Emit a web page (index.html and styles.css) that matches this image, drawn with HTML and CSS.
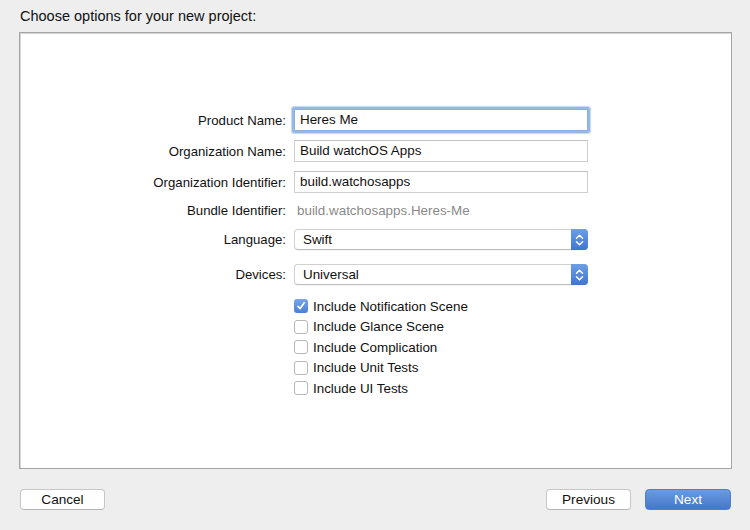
FILE: index.html
```html
<!DOCTYPE html>
<html>
<head>
<meta charset="utf-8">
<link rel="stylesheet" href="styles.css">
</head>
<body>
<div class="window">
  <div class="title">Choose options for your new project:</div>
  <div class="panel">
    <div class="form">
      <div class="row row-product">
        <div class="label">Product Name:</div>
        <div class="field focused">Heres Me</div>
      </div>
      <div class="row row-org">
        <div class="label">Organization Name:</div>
        <div class="field">Build watchOS Apps</div>
      </div>
      <div class="row row-orgid">
        <div class="label">Organization Identifier:</div>
        <div class="field">build.watchosapps</div>
      </div>
      <div class="row row-bundle">
        <div class="label">Bundle Identifier:</div>
        <div class="static">build.watchosapps.Heres-Me</div>
      </div>
      <div class="row row-lang">
        <div class="label">Language:</div>
        <div class="popup"><span class="popup-text">Swift</span><span class="stepper"><svg width="9" height="14" viewBox="0 0 9 14"><path d="M1.5 5.2 L4.5 2.2 L7.5 5.2 M1.5 8.8 L4.5 11.8 L7.5 8.8" fill="none" stroke="#fff" stroke-width="1.5" stroke-linecap="round" stroke-linejoin="round"/></svg></span></div>
      </div>
      <div class="row row-dev">
        <div class="label">Devices:</div>
        <div class="popup"><span class="popup-text">Universal</span><span class="stepper"><svg width="9" height="14" viewBox="0 0 9 14"><path d="M1.5 5.2 L4.5 2.2 L7.5 5.2 M1.5 8.8 L4.5 11.8 L7.5 8.8" fill="none" stroke="#fff" stroke-width="1.5" stroke-linecap="round" stroke-linejoin="round"/></svg></span></div>
      </div>
      <div class="checks">
        <div class="check-row"><span class="box checked"><svg width="10" height="10" viewBox="0 0 10 10"><path d="M2 5.3 L4.2 7.6 L8.2 1.8" fill="none" stroke="#fff" stroke-width="1.7" stroke-linecap="round" stroke-linejoin="round"/></svg></span>Include Notification Scene</div>
        <div class="check-row"><span class="box"></span>Include Glance Scene</div>
        <div class="check-row"><span class="box"></span>Include Complication</div>
        <div class="check-row"><span class="box"></span>Include Unit Tests</div>
        <div class="check-row"><span class="box"></span>Include UI Tests</div>
      </div>
    </div>
  </div>
  <div class="footer">
    <div class="btn">Cancel</div>
    <div class="right-btns">
      <div class="btn">Previous</div>
      <div class="btn primary">Next</div>
    </div>
  </div>
</div>
</body>
</html>
```

FILE: styles.css
```css
* { box-sizing: border-box; }
html, body {
  margin: 0;
  padding: 0;
  background: #eeeeee;
}
body {
  font-family: "Liberation Sans", Arial, sans-serif;
  color: #111;
  width: 750px;
  height: 530px;
  overflow: hidden;
}
.window {
  display: flex;
  flex-direction: column;
  height: 530px;
}
.title {
  font-size: 14.5px;
  padding: 8px 0 0 20px;
  height: 32px;
  line-height: 17px;
}
.panel {
  margin-left: 19px;
  width: 713px;
  height: 437px;
  background: #ffffff;
  border: 1px solid #a6a6a6;
  box-shadow: inset 1px 1px 0 #d4d4d4;
  padding-top: 76px;
}
.form {
  display: flex;
  flex-direction: column;
}
.row {
  display: flex;
  align-items: center;
  height: 22px;
}
.row-org, .row-orgid { margin-top: 9px; }
.row-bundle { margin-top: 6px; }
.row-lang { margin-top: 8px; height: 21px; }
.row-dev { margin-top: 14px; height: 21px; }
.label {
  width: 266px;
  text-align: right;
  font-size: 13.2px;
  margin-right: 8px;
  flex: none;
}
.field {
  width: 294px;
  height: 22px;
  border: 1px solid #cfcfcf;
  border-top-color: #c2c2c2;
  background: #fff;
  font-size: 13.4px;
  line-height: 20px;
  padding-left: 5px;
  color: #111;
}
.field.focused {
  box-shadow: 0 0 0 2px #98b8e4, 0 0 1px 3px #c4d7f1;
  border-color: #8eaedb;
  border-radius: 1px;
}
.static {
  font-size: 13.4px;
  color: #8a8a8a;
  padding-left: 3px;
}
.popup {
  width: 294px;
  height: 21px;
  border: 1px solid #d0d0d0;
  border-bottom-color: #bdbdbd;
  border-radius: 4px;
  background: #fff;
  display: flex;
  align-items: center;
  justify-content: space-between;
  box-shadow: 0 1px 0 rgba(0,0,0,0.04);
}
.popup-text {
  font-size: 13.4px;
  padding-left: 8px;
  color: #111;
}
.stepper {
  width: 17px;
  height: 21px;
  margin-right: -1px;
  border-radius: 0 4px 4px 0;
  background: linear-gradient(#6d9ee6, #3f76cf);
  display: flex;
  align-items: center;
  justify-content: center;
}
.checks {
  margin-top: 11px;
  margin-left: 274px;
  display: flex;
  flex-direction: column;
}
.check-row {
  height: 20.5px;
  display: flex;
  align-items: center;
  font-size: 13.4px;
  color: #111;
}
.box {
  width: 14px;
  height: 14px;
  border: 1px solid #b8b8b8;
  border-radius: 3px;
  background: #fff;
  margin-right: 5px;
  flex: none;
  display: flex;
  align-items: center;
  justify-content: center;
}
.box.checked {
  border: none;
  background: linear-gradient(#78a6e8, #4a7fd6);
}
.footer {
  margin-top: 20px;
  padding: 0 19px 0 20px;
  display: flex;
  justify-content: space-between;
}
.right-btns {
  display: flex;
  gap: 14px;
}
.btn {
  width: 85px;
  height: 21px;
  border: 1px solid #c6c6c6;
  border-bottom-color: #b4b4b4;
  border-radius: 4px;
  background: #ffffff;
  font-size: 13.6px;
  line-height: 19px;
  text-align: center;
  color: #111;
}
.btn.primary {
  width: 86px;
  border: 1px solid #4f7fc9;
  background: linear-gradient(#6b9be0, #4476cb);
  color: #ffffff;
}
```
